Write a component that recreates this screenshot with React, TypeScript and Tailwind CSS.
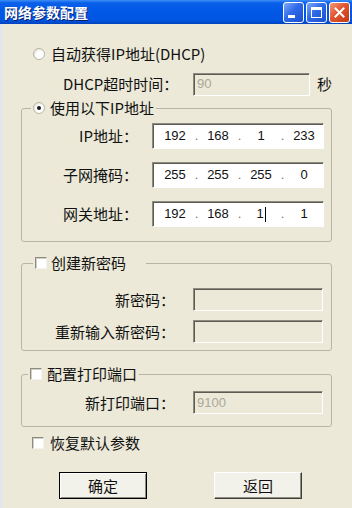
import React from "react";

const zh = "font-['Noto_Sans_CJK_SC','Liberation_Sans',sans-serif]";
const latin = "font-['Liberation_Sans','Noto_Sans_CJK_SC',sans-serif]";

const sunken =
  "border border-t-[#8d8b7f] border-l-[#8d8b7f] border-r-white border-b-white shadow-[inset_1px_1px_0_#5e5c52]";

const Radio = ({ checked }: { checked?: boolean }) => (
  <span className="flex items-center justify-center w-[12px] h-[12px] shrink-0 rounded-full border border-[#b9b6a6] bg-[radial-gradient(circle_at_65%_65%,#ffffff_40%,#dcd9cb_100%)]">
    {checked && <span className="w-[4px] h-[4px] rounded-full bg-[#1b1b1b]" />}
  </span>
);

const Check = () => (
  <span className="w-[12px] h-[12px] shrink-0 bg-white border border-t-[#8e8c80] border-l-[#8e8c80] border-r-[#f4f3ee] border-b-[#f4f3ee] shadow-[inset_1px_1px_0_#d2d0c4]" />
);

type IpProps = { parts: string[]; cursor?: number };

const IpBox = ({ parts, cursor }: IpProps) => (
  <div className={`${sunken} bg-white w-[172px] h-[26px] flex items-center pl-[4px] ${latin} text-[13px] text-[#111]`}>
    {parts.map((p, i) => (
      <React.Fragment key={i}>
        <span className="w-[36px] flex justify-center items-center">
          {p}
          {cursor === i && <span className="ml-[1px] w-[1px] h-[15px] bg-black" />}
        </span>
        {i < parts.length - 1 && <span className="w-[7px] text-center text-[#777]">.</span>}
      </React.Fragment>
    ))}
  </div>
);

const DisabledBox = ({ value, width }: { value?: string; width: string }) => (
  <div className={`${sunken} ${width} h-[23px] bg-[#ece9d8] flex items-center pl-[3px] ${latin} text-[13px] text-[#aaa898]`}>
    {value}
  </div>
);

const TitleButton = ({ kind }: { kind: "min" | "max" | "close" }) => (
  <div
    className={`w-[21px] h-[21px] rounded-[3px] border border-white flex items-center justify-center ${
      kind === "close"
        ? "bg-[linear-gradient(135deg,#f39a7b_0%,#e1552f_45%,#c33a16_100%)]"
        : "bg-[linear-gradient(135deg,#7fa9f7_0%,#2e6ae8_45%,#1a4fd0_100%)]"
    }`}
  >
    {kind === "min" && <span className="w-[7px] h-[3px] bg-white mt-[8px] -ml-[4px]" />}
    {kind === "max" && <span className="w-[11px] h-[11px] border border-white border-t-[3px]" />}
    {kind === "close" && (
      <svg width="11" height="11" viewBox="0 0 11 11">
        <path d="M1.5 1.5 L9.5 9.5 M9.5 1.5 L1.5 9.5" stroke="#fff" strokeWidth="2" strokeLinecap="square" />
      </svg>
    )}
  </div>
);

export default function App() {
  return (
    <div className={`w-[352px] h-[508px] overflow-hidden flex flex-col bg-[#ece9d8] ${zh}`}>
      <div className="h-[24px] shrink-0 flex items-center justify-between pl-[4px] pr-[2px] bg-[linear-gradient(to_bottom,#3d8ef7_0%,#0a60ea_12%,#0058e6_45%,#0055e0_85%,#0342bb_100%)]">
        <span className="text-white font-bold text-[14px] leading-none [text-shadow:1px_1px_0_#0a1f6a]">
          网络参数配置
        </span>
        <div className="flex gap-[2px]">
          <TitleButton kind="min" />
          <TitleButton kind="max" />
          <TitleButton kind="close" />
        </div>
      </div>

      <div className="flex flex-1">
        <div className="w-[2px] bg-[#dfe6f1]" />
        <div className="flex-1 flex flex-col text-[15px] text-[#111] leading-[20px]">
          <div className="mt-[20px] h-[20px] pl-[31px] flex items-center">
            <Radio />
            <span className="ml-[6px]">自动获得IP地址(DHCP)</span>
          </div>

          <div className="mt-[8px] h-[24px] pl-[61px] flex items-center">
            <span className="w-[130px]">DHCP超时时间：</span>
            <DisabledBox value="90" width="w-[117px]" />
            <span className="ml-[7px]">秒</span>
          </div>

          <fieldset className="mt-[2px] ml-[19px] w-[311px] border border-[#b7b5a8] rounded-[3px]">
            <legend className="ml-[9px] pl-[2px] pr-[2px]">
              <div className="h-[20px] flex items-center">
                <Radio checked />
                <span className="ml-[5px]">使用以下IP地址</span>
              </div>
            </legend>
            <div className="mt-[5px] pb-[14px] flex flex-col gap-[13px]">
              <div className="flex items-center">
                <span className="w-[130px] text-right pr-[14px]">IP地址：</span>
                <IpBox parts={["192", "168", "1", "233"]} />
              </div>
              <div className="flex items-center">
                <span className="w-[130px] text-right pr-[14px]">子网掩码：</span>
                <IpBox parts={["255", "255", "255", "0"]} />
              </div>
              <div className="flex items-center">
                <span className="w-[130px] text-right pr-[14px]">网关地址：</span>
                <IpBox parts={["192", "168", "1", "1"]} cursor={2} />
              </div>
            </div>
          </fieldset>

          <fieldset className="mt-[11px] ml-[19px] w-[311px] border border-[#b7b5a8] rounded-[3px]">
            <legend className="ml-[11px] pl-[2px] pr-[20px]">
              <div className="h-[20px] flex items-center">
                <Check />
                <span className="ml-[4px]">创建新密码</span>
              </div>
            </legend>
            <div className="mt-[15px] pb-[7px] flex flex-col gap-[9px]">
              <div className="flex items-center">
                <span className="w-[171px] text-right pr-[18px]">新密码：</span>
                <DisabledBox width="w-[130px]" />
              </div>
              <div className="flex items-center">
                <span className="w-[171px] text-right pr-[18px]">重新输入新密码：</span>
                <DisabledBox width="w-[130px]" />
              </div>
            </div>
          </fieldset>

          <fieldset className="mt-[13px] ml-[19px] w-[311px] border border-[#b7b5a8] rounded-[3px]">
            <legend className="ml-[6px] pl-[2px] pr-[2px]">
              <div className="h-[20px] flex items-center">
                <Check />
                <span className="ml-[5px]">配置打印端口</span>
              </div>
            </legend>
            <div className="mt-[7px] pb-[12px] flex items-center">
              <span className="w-[171px] text-right pr-[18px]">新打印端口：</span>
              <DisabledBox value="9100" width="w-[130px]" />
            </div>
          </fieldset>

          <div className="mt-[6px] h-[20px] pl-[30px] flex items-center">
            <Check />
            <span className="ml-[6px]">恢复默认参数</span>
          </div>

          <div className="mt-[19px] flex">
            <button className="ml-[57px] w-[88px] h-[27px] border border-black bg-[#f3f2ea] shadow-[inset_1px_1px_0_#ffffff,inset_-1px_-1px_0_#8f8d80] flex items-center justify-center">
              确定
            </button>
            <button className="ml-[67px] w-[88px] h-[27px] border border-t-white border-l-white border-r-[#3f3e38] border-b-[#3f3e38] bg-[#f3f2ea] shadow-[inset_-1px_-1px_0_#8f8d80] flex items-center justify-center">
              返回
            </button>
          </div>
        </div>
      </div>
    </div>
  );
}
